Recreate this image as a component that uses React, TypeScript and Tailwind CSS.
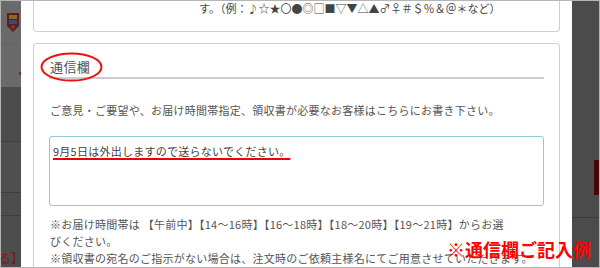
import React from "react";

export default function App() {
  return (
    <div className="relative w-[600px] h-[268px] overflow-hidden border border-[#b5b5b5] flex font-['Noto_Sans_CJK_JP',sans-serif] bg-white">
      {/* left dimmed background strip */}
      <div className="w-[20px] flex flex-col shrink-0">
        <div className="h-[86px] bg-[#6a6a6a] flex flex-col">
          <div className="h-[11px]" />
          <svg width="20" height="22" viewBox="0 0 20 22">
            <path d="M6 1 L18 1 L18 14 L12 20 L6 14 Z" fill="#5a2020" />
            <rect x="8" y="3" width="8" height="4" fill="#8a6a20" />
            <rect x="8" y="8" width="8" height="4" fill="#3a4a7a" />
            <circle cx="12" cy="15" r="2" fill="#8a3030" />
          </svg>
          <div className="mt-[9px] h-[1px] bg-[#7a5a5a]" />
          <div className="mt-[28px] ml-[18px] w-[2px] h-[3px] bg-[#8a2020]" />
        </div>
        <div className="h-[55px] bg-[#4c4c4c] border-b border-[#3f3f3f]" />
        <div className="h-[51px] bg-[#4f4f4f] border-b border-[#3f3f3f]" />
        <div className="h-[23px] bg-[#4d4d4d] border-b border-[#3f3f3f]" />
        <div className="flex-1 bg-[#4d4d4d] flex items-end pb-[2px]">
          <span className="text-[13px] leading-[14px] text-[#7a1a1a] -ml-[3px] whitespace-nowrap">る】</span>
        </div>
      </div>

      {/* modal */}
      <div className="w-[551px] shrink-0 bg-white px-[12px] flex flex-col">
        <div className="h-[31px] border border-t-0 border-[#cfcfcf] rounded-b-[4px] shrink-0">
          <p className="pl-[165px] text-[11px] leading-[14px] text-[#444] whitespace-nowrap">
            す。（例：♪☆★〇●◎□■▽▼△▲♂♀＃＄％＆＠＊など）
          </p>
        </div>

        <div className="mt-[11px] flex-1 border border-b-0 border-[#cfcfcf] rounded-t-[4px] px-[15px] pt-[12px]">
          <div className="border-b-2 border-[#cccccc] pl-[1px] text-[13px] leading-[21px] tracking-[0.4px] text-[#555]">
            通信欄
          </div>
          <p className="mt-[22px] pl-[1px] text-[11px] leading-[18px] tracking-[0.25px] text-[#555] whitespace-nowrap">
            ご意見・ご要望や、お届け時間帯指定、領収書が必要なお客様はこちらにお書き下さい。
          </p>
          <div className="mt-[17px] h-[70px] border border-[#8ecad8] rounded-[3px] pl-[3px]">
            <span className="text-[11px] leading-[17px] tracking-[0.25px] text-[#444] underline decoration-2 decoration-[#ee0000] underline-offset-[2px]">
              9月5日は外出しますので送らないでください。
            </span>
          </div>
          <p className="mt-[10px] pl-[1px] text-[11px] leading-[17px] tracking-[0.25px] text-[#555] whitespace-nowrap">
            ※お届け時間帯は 【午前中】【14〜16時】【16〜18時】【18〜20時】【19〜21時】からお選
            <br />
            びください。
            <br />
            ※領収書の宛名のご指示がない場合は、注文時のご依頼主様名にてご用意させていただきます。
          </p>
        </div>
      </div>

      {/* right dimmed strip */}
      <div className="flex-1 bg-[#4b4b4b] flex flex-col items-end">
        <div className="h-[159px]" />
        <div className="w-[5px] h-[35px] bg-[#4a0606]" />
        <div className="h-[22px]" />
        <div className="w-full h-[1px] bg-[#3c3c3c]" />
      </div>

      {/* annotation overlays */}
      <svg
        className="absolute left-[39px] top-[51px]"
        width="64"
        height="31"
        viewBox="0 0 64 31"
      >
        <ellipse cx="31.5" cy="15" rx="30" ry="13.5" fill="none" stroke="#ee1111" strokeWidth="2" />
      </svg>
      <div className="absolute right-[8px] bottom-[9px] text-[18px] leading-[18px] font-bold text-[#ff0000] whitespace-nowrap">
        ※通信欄ご記入例
      </div>
    </div>
  );
}
